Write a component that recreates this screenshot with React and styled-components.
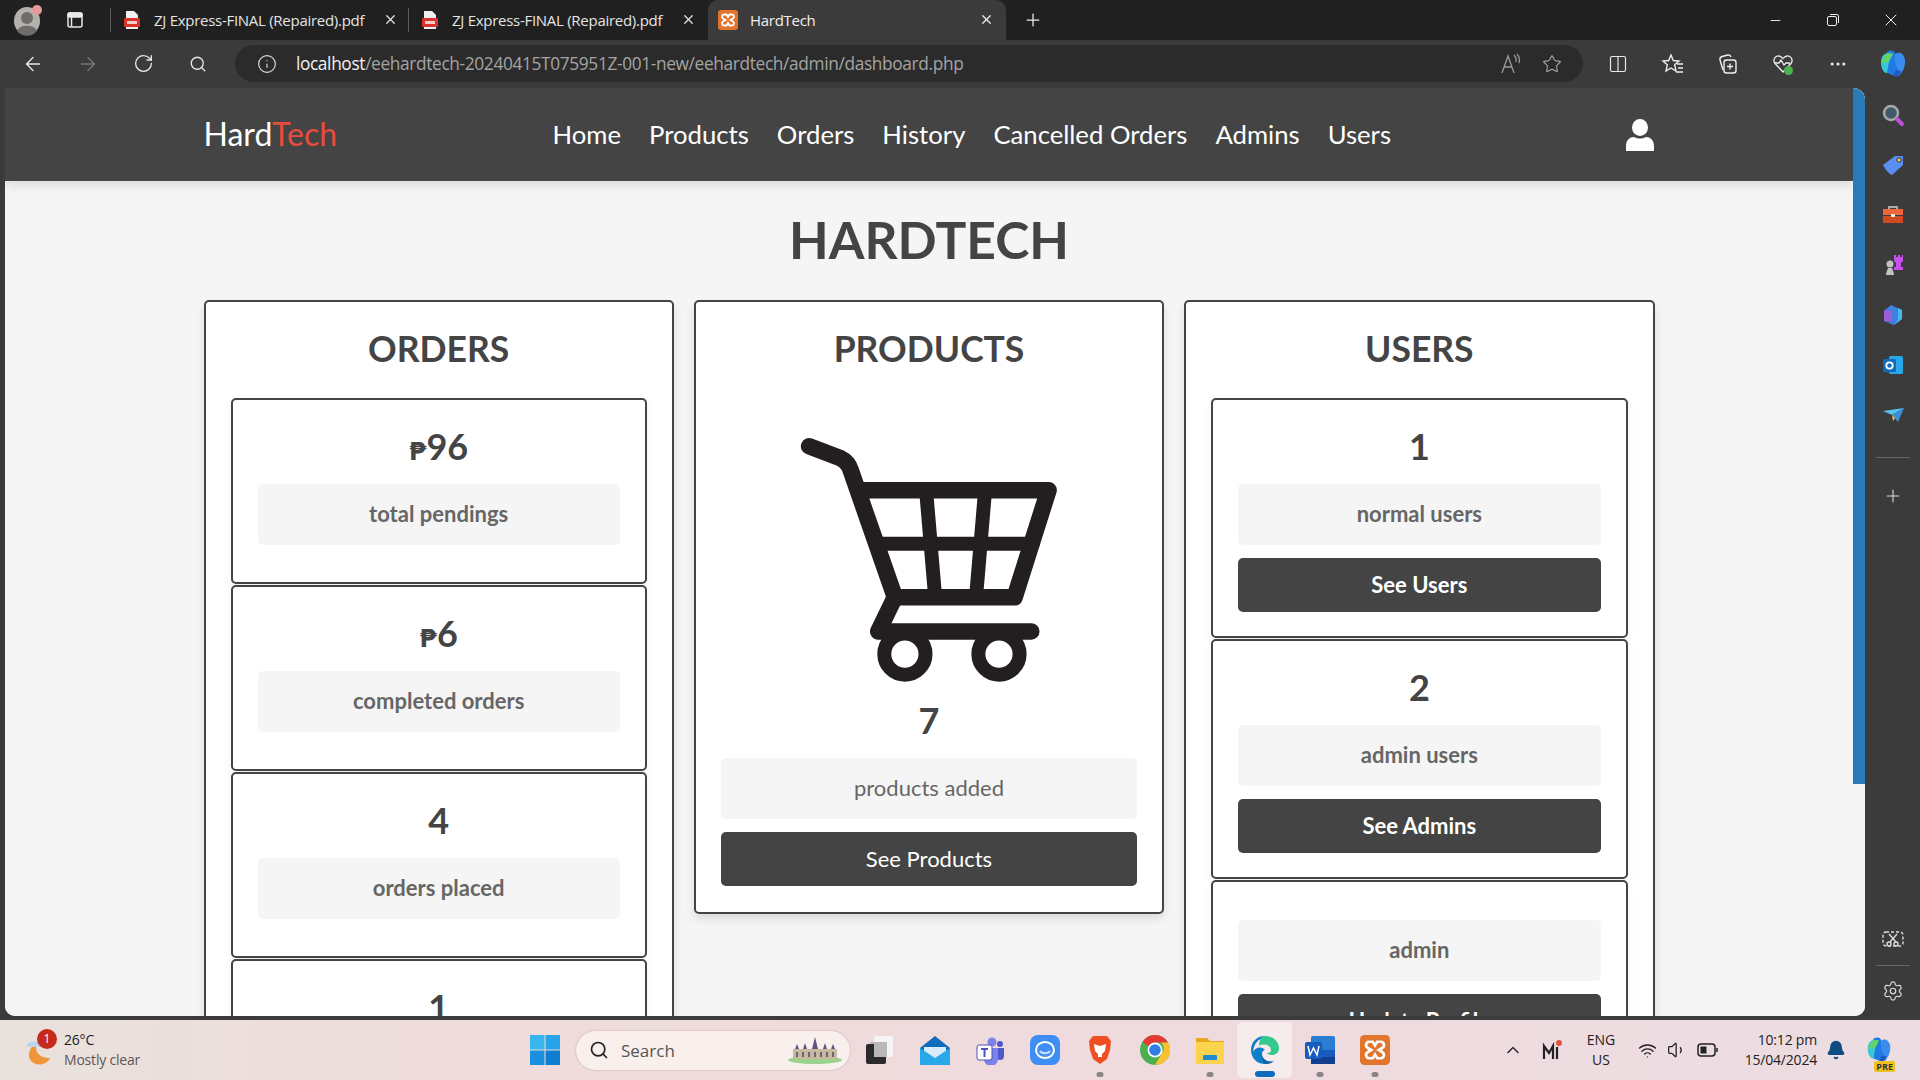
import styled, { createGlobalStyle } from "styled-components"
import {
  ArrowLeft,
  ArrowRight,
  RotateCw,
  Search,
  Info,
  Star,
  Plus,
  X,
  Minus,
  ChevronUp,
  Wifi,
  Volume1,
  Bell,
  Settings,
  MoreHorizontal,
  Columns2,
} from "lucide-react"

const GlobalStyle = createGlobalStyle`
  html, body {
    margin: 0;
    padding: 0;
    width: 1920px;
    height: 1080px;
    overflow: hidden;
    background: #202020;
  }
  * { box-sizing: border-box; }
`

const uiFont = `"Open Sans", "Noto Sans", sans-serif`
const pageFont = `Lato, "Noto Sans", "DejaVu Sans", sans-serif`

const Screen = styled.div`
  width: 1920px;
  height: 1080px;
  display: flex;
  flex-direction: column;
  overflow: hidden;
  font-family: ${uiFont};
`

/* browser chrome */
const TabBar = styled.div`
  height: 40px;
  flex: none;
  display: flex;
  align-items: stretch;
  background: #202020;
  color: #eee;
`

const TabStart = styled.div`
  width: 112px;
  display: flex;
  align-items: center;
  padding-left: 12px;
  gap: 21px;
`

const Tab = styled.div`
  width: 298px;
  display: flex;
  align-items: center;
  gap: 12px;
  padding: 0 12px 1px 10px;
  font-size: 15px;
  letter-spacing: -0.28px;
  color: ${(p) => (p.$active ? "#f0f0f0" : "#e4e4e4")};
  background: ${(p) => (p.$active ? "#3b3b3b" : "transparent")};
  border-radius: ${(p) => (p.$active ? "10px 10px 0 0" : "0")};
  position: relative;

  &::before {
    content: "";
    display: ${(p) => (p.$sep ? "block" : "none")};
    position: absolute;
    left: -2px;
    top: 8px;
    bottom: 8px;
    width: 1px;
    background: #5a5a5a;
  }

  span {
    flex: 1;
    white-space: nowrap;
  }
`

const NewTab = styled.div`
  margin-left: 17px;
  display: flex;
  align-items: center;
`

const WindowControls = styled.div`
  margin-left: auto;
  display: flex;
`

const WindowButton = styled.div`
  width: 58px;
  display: flex;
  align-items: center;
  justify-content: center;
`

const Toolbar = styled.div`
  height: 48px;
  flex: none;
  display: flex;
  align-items: center;
  padding: 0 0 1px 6px;
  background: #3b3b3b;
  color: #eee;
`

const ToolSlot = styled.div`
  width: ${(p) => p.$w || 55}px;
  display: flex;
  align-items: center;
  justify-content: center;
  color: ${(p) => (p.$dim ? "#777" : "#e8e8e8")};
`

const AddressBar = styled.div`
  width: 1349px;
  height: 37px;
  margin: 0 7px 0 9px;
  border-radius: 19px;
  background: #2b2b2b;
  display: flex;
  align-items: center;
  padding: 0 21px 0 22px;
  gap: 19px;
  color: #ddd;
`

const Url = styled.div`
  flex: 1;
  font-size: 17.3px;
  letter-spacing: -0.35px;
  color: #a4a4a4;
  white-space: nowrap;

  b {
    font-weight: 400;
    color: #f2f2f2;
  }
`

const Main = styled.div`
  flex: 1;
  min-height: 0;
  display: flex;
  padding: 0 0 4px 5px;
  background: #3b3b3b;
`

const WebArea = styled.div`
  width: 1860px;
  display: flex;
  overflow: hidden;
  border-radius: 0 12px 10px 10px;
  background: #f5f5f5;
`

const Viewport = styled.div`
  width: 1848px;
  display: flex;
  flex-direction: column;
  overflow: hidden;
  font-family: ${pageFont};
`

const ScrollTrack = styled.div`
  width: 12px;
  background: #f5f5f5;
`

const ScrollThumb = styled.div`
  height: 696px;
  background: #2a7ab8;
`

/* the page itself */
const Navbar = styled.header`
  height: 93px;
  flex: none;
  background: #444;
  box-shadow: 0 5px 10px rgba(0, 0, 0, 0.1);
  position: relative;
  z-index: 1;
`

const NavInner = styled.div`
  width: 1451px;
  height: 100%;
  margin: 0 auto;
  display: flex;
  align-items: center;
`

const Logo = styled.a`
  width: 349px;
  padding-bottom: 2px;
  font-size: 32px;
  color: #fff;

  span {
    color: #e74c3c;
  }
`

const NavLinks = styled.nav`
  display: flex;
  gap: 28px;
  padding-bottom: 2px;
`

const NavLink = styled.a`
  font-size: 25.7px;
  color: #fff;
`

const UserIcon = styled.div`
  margin-left: auto;
  margin-right: 1px;
  display: flex;
`

const Page = styled.main`
  flex: 1;
  min-height: 0;
  overflow: hidden;
  background: #f5f5f5;
`

const Heading = styled.h1`
  margin: 28px 0 31px;
  font-size: 51.5px;
  line-height: 60px;
  font-weight: 700;
  text-align: center;
  color: #444;
`

const Columns = styled.div`
  width: 1451px;
  margin: 0 auto;
  display: grid;
  grid-template-columns: repeat(3, 1fr);
  gap: 20px;
  align-items: start;
`

const Card = styled.section`
  background: #fff;
  border: 2px solid #444;
  border-radius: 5px;
  padding: 24px 25px 26px;
  box-shadow: 0 5px 10px rgba(0, 0, 0, 0.1);
  display: flex;
  flex-direction: column;
`

const CardTitle = styled.h2`
  margin: 0 0 26px;
  font-size: 35.5px;
  line-height: 46px;
  font-weight: 700;
  text-align: center;
  color: #444;
`

const InnerCard = styled.div`
  background: #fff;
  border: 2px solid #444;
  border-radius: 5px;
  padding: ${(p) => (p.$noValue ? "38px" : "25px")} 25px 0;
  height: ${(p) => p.$h}px;
  margin-bottom: 1.5px;
  box-shadow: 0 5px 10px rgba(0, 0, 0, 0.06);
`

const Value = styled.div`
  height: 46px;
  margin-bottom: 13px;
  font-size: 36px;
  line-height: 43px;
  font-weight: 700;
  text-align: center;
  color: #444;

  small {
    font-size: 25px;
    font-family: "DejaVu Sans", sans-serif;
  }
`

const Pill = styled.div`
  height: 61px;
  padding-bottom: 2px;
  border-radius: 5px;
  background: #f5f5f5;
  display: flex;
  align-items: center;
  justify-content: center;
  font-size: 22px;
  font-weight: ${(p) => (p.$plain ? 400 : 700)};
  color: #666;
`

const DarkButton = styled.a`
  height: 54px;
  margin-top: 13px;
  padding-bottom: 2px;
  border-radius: 5px;
  background: #444;
  display: flex;
  align-items: center;
  justify-content: center;
  font-size: 22px;
  font-weight: ${(p) => (p.$plain ? 400 : 700)};
  color: #fff;
`

const CartWrap = styled.div`
  margin: 39px 0 16px;
  display: flex;
  justify-content: center;
`

const SideBar = styled.aside`
  flex: 1;
  display: flex;
  flex-direction: column;
  align-items: center;
  padding-top: 2px;
  color: #ddd;
`

const SideItem = styled.div`
  height: 50px;
  flex: none;
  display: flex;
  align-items: center;
  justify-content: center;
`

const SideRule = styled.div`
  width: 34px;
  height: 1px;
  flex: none;
  margin: ${(p) => p.$m || "0"};
  background: #666;
`

const Spacer = styled.div`
  flex: 1;
`

/* windows taskbar */
const Taskbar = styled.footer`
  height: 60px;
  flex: none;
  display: flex;
  align-items: center;
  background: linear-gradient(90deg, #e9e1dc 0%, #efdcdb 25%, #efdadd 60%, #ecdde2 100%);
  color: #222;
`

const Weather = styled.div`
  width: 517px;
  display: flex;
  align-items: center;
  padding-left: 24px;
  gap: 8px;
`

const WeatherIcon = styled.div`
  position: relative;
  width: 32px;
  height: 40px;
`

const Badge = styled.div`
  position: absolute;
  top: -1px;
  right: -1px;
  width: 20px;
  height: 20px;
  border-radius: 50%;
  background: #c42b1c;
  color: #fff;
  font-size: 12px;
  line-height: 20px;
  text-align: center;
`

const WeatherText = styled.div`
  font-size: 14px;
  line-height: 20px;
  letter-spacing: -0.2px;

  div + div {
    color: #5d5555;
  }
`

const TaskSlot = styled.div`
  width: ${(p) => p.$w || 55}px;
  height: 56px;
  flex: none;
  display: flex;
  align-items: center;
  justify-content: center;
  position: relative;
  border-radius: 5px;
  background: ${(p) => (p.$active ? "rgba(255,255,255,.45)" : "transparent")};

  &::after {
    content: "";
    display: ${(p) => (p.$dot ? "block" : "none")};
    position: absolute;
    bottom: 1px;
    left: 50%;
    width: ${(p) => (p.$active ? 20 : 7)}px;
    height: ${(p) => (p.$active ? 6 : 5)}px;
    transform: translateX(-50%);
    border-radius: 3px;
    background: ${(p) => (p.$active ? "#0b6cbd" : "#8a8488")};
  }
`

const SearchBox = styled.div`
  width: 274px;
  height: 39px;
  margin: 0 2px 0 4px;
  border-radius: 20px;
  background: #f9f0ed;
  box-shadow: 0 0 2px rgba(0, 0, 0, 0.25);
  display: flex;
  align-items: center;
  padding: 0 7px 0 13px;
  gap: 12px;
  font-size: 17px;
  color: #555;

  span {
    flex: 1;
  }
`

const Tray = styled.div`
  margin-left: auto;
  padding-right: 17px;
  display: flex;
  align-items: center;
  color: #222;
`

const TraySlot = styled.div`
  width: ${(p) => p.$w}px;
  display: flex;
  align-items: center;
  justify-content: center;
  position: relative;
`

const PreTag = styled.div`
  position: absolute;
  right: 8px;
  bottom: -8px;
  padding: 0 2px;
  border-radius: 2px;
  background: #f0c21f;
  font-size: 9px;
  line-height: 11px;
  font-weight: 700;
  color: #333;
`

const Lang = styled.div`
  width: 48px;
  margin-right: 7px;
  font-size: 14px;
  line-height: 20px;
  text-align: center;
`

const Clock = styled.div`
  width: 93px;
  font-size: 14px;
  line-height: 20px;
  text-align: right;
  letter-spacing: -0.2px;
`

/* drawings */
function PdfIcon() {
  return (
    <svg width="20" height="20" viewBox="0 0 20 20">
      <path d="M4 1h8l4 4v14H4z" fill="#f1f1f1" />
      <rect x="2" y="8" width="16" height="9" rx="1" fill="#d8342c" />
      <rect x="5" y="11" width="10" height="3" fill="#f6c9c5" />
    </svg>
  )
}

function XamppIcon({ size = 20 }) {
  return (
    <svg width={size} height={size} viewBox="0 0 20 20">
      <rect width="20" height="20" rx="3" fill="#e2752c" />
      <path
        d="M6 4.5h2.5L10 7l1.5-2.500H14a2.200 2.200 0 0 1 1 4L12.500 10l2.500 1.500a2.200 2.200 0 0 1-1 4h-2.500L10 13l-1.500 2.500H6a2.200 2.200 0 0 1-1-4L7.500 10 5 8.500a2.200 2.200 0 0 1 1-4z"
        fill="none"
        stroke="#fff"
        strokeWidth="1.800"
      />
    </svg>
  )
}

function Avatar() {
  return (
    <svg width="32" height="32" viewBox="0 0 32 32">
      <ellipse cx="15" cy="17" rx="13" ry="14" fill="#b5b1ad" />
      <circle cx="15" cy="14" r="6" fill="#6f6d6b" />
      <path d="M5 27c2-7 18-7 20 0a13 13 0 0 1-20 0z" fill="#6f6d6b" />
      <circle cx="25" cy="6" r="5" fill="#e79a9a" />
    </svg>
  )
}

function VerticalTabs() {
  return (
    <svg width="20" height="20" viewBox="0 0 20 20" fill="none" stroke="#e8e8e8" strokeWidth="1.500">
      <rect x="3" y="3" width="14" height="14" rx="2" />
      <path d="M6.500 3.500v13" />
      <rect x="3" y="3" width="14" height="4" rx="1.500" fill="#e8e8e8" />
    </svg>
  )
}

function RestoreIcon() {
  return (
    <svg width="14" height="14" viewBox="0 0 14 14" fill="none" stroke="#eee">
      <rect x="1.500" y="3.500" width="9" height="9" rx="1.500" />
      <path d="M4 1.500h7a1.500 1.500 0 0 1 1.500 1.500v7" />
    </svg>
  )
}

function ReadAloudIcon() {
  return (
    <svg width="24" height="24" viewBox="0 0 24 24" fill="none" stroke="#999" strokeWidth="1.300">
      <path d="M3 21L9 4l6 17M5 15h8" />
      <path d="M15 3c2 2 2.500 4 2 7M18 2c2.500 3 3 6 2 9" />
    </svg>
  )
}

function FavoritesBar() {
  return (
    <svg width="24" height="24" viewBox="0 0 24 24" fill="none" stroke="#eee" strokeWidth="1.400">
      <path d="M10 3l2.300 5.500L18 9l-4.300 3.800L15 19l-5-3-5 3 1.300-6.200L2 9l5.700-.5z" />
      <path d="M16 12h6M17 16h5M15 20h7" />
    </svg>
  )
}

function HeartShield() {
  return (
    <svg width="24" height="24" viewBox="0 0 24 24" fill="none" stroke="#eee" strokeWidth="1.300">
      <path d="M12 20L4 11.500C1.500 8 4 3.500 8 4c2 .2 3 1.500 4 2.500C13 5.500 14 4.200 16 4c4-.5 6.500 4 4 7.500z" />
      <path d="M4 11h4l2-3 3 5 2-2h4" />
      <circle cx="17.500" cy="18.500" r="4.500" fill="#4caf50" stroke="none" />
    </svg>
  )
}

function CollectionsIcon() {
  return (
    <svg width="22" height="22" viewBox="0 0 22 22" fill="none" stroke="#eee" strokeWidth="1.400">
      <path d="M6 17L3 7c-.4-2 .5-3 2-3.500L11 2c1.500-.3 2.500.5 3 2" />
      <rect x="7" y="7" width="12" height="13" rx="2.500" />
      <path d="M13 10.500v6M10 13.500h6" />
    </svg>
  )
}

function Copilot({ size = 30 }) {
  return (
    <svg width={size} height={size} viewBox="0 0 30 30">
      <path d="M9 3c3-2 7-2 8 1l6 18c1 4-3 6-6 5L9 24z" fill="#1f7be0" />
      <path d="M3 13c0-6 4-9 7-9l5 1-4 8-2 11c-4 0-6-5-6-11z" fill="#39c6d8" />
      <path d="M17 5c4-3 9-1 10 6 .6 6-2 12-5 14l-5-12z" fill="#3a8df0" />
      <path d="M10 13l5-8c-2-1-4-1-6 0-3 2-5 5-5 9z" fill="#65d45f" />
      <path d="M15 27c3 1 7-1 8-5l-5-1z" fill="#2456c9" />
    </svg>
  )
}

function Lens() {
  return (
    <svg width="24" height="24" viewBox="0 0 24 24">
      <circle cx="10" cy="10" r="7" fill="#3f5a68" stroke="#a8a8a8" strokeWidth="2.500" />
      <path d="M16 16l5 5" stroke="#c04fd8" strokeWidth="4" strokeLinecap="round" />
    </svg>
  )
}

function TagIcon() {
  return (
    <svg width="24" height="24" viewBox="0 0 24 24">
      <path d="M2 12L14 3h8v9L11 22c-3-1-7-6-9-10z" fill="#5b8df5" />
      <circle cx="18" cy="7" r="2.200" fill="#f1c84b" stroke="#333" />
    </svg>
  )
}

function Toolbox() {
  return (
    <svg width="24" height="24" viewBox="0 0 24 24">
      <path d="M8 7V4h8v3" fill="none" stroke="#aaa" strokeWidth="2" />
      <rect x="2" y="6" width="20" height="6" fill="#f0653a" />
      <rect x="2" y="13" width="20" height="7" fill="#cf4a22" />
      <rect x="10" y="11" width="4" height="3" fill="#eee" />
    </svg>
  )
}

function ChessIcon() {
  return (
    <svg width="24" height="24" viewBox="0 0 24 24">
      <circle cx="9" cy="11" r="3.500" fill="#c2c2c2" />
      <path d="M5 22c0-3 1.500-5 2-7h4c.5 2 2 4 2 7z" fill="#c2c2c2" />
      <path d="M13 2h2v2h2V2h2v2h2V2h1v6l-2 2v4h2v3h-9v-3h2v-4l-2-2z" fill="#c64ff0" />
    </svg>
  )
}

function OfficeIcon() {
  return (
    <svg width="24" height="24" viewBox="0 0 24 24">
      <path d="M10 2l11 5v9l-8 6-10-4 8 1V8l-7 3V7z" fill="#3f7fe0" />
      <path d="M3 7v11l8 1V8z" fill="#9a5fd8" />
      <path d="M13 22l8-6V7l-4-2v12z" fill="#46b9e8" />
    </svg>
  )
}

function OutlookIcon({ size = 24 }) {
  return (
    <svg width={size} height={size} viewBox="0 0 24 24">
      <rect x="8" y="3" width="14" height="18" rx="1.500" fill="#28a8ea" />
      <rect x="2" y="6" width="13" height="13" rx="1.500" fill="#0f6cbd" />
      <circle cx="8.500" cy="12.500" r="3.200" fill="none" stroke="#fff" strokeWidth="1.800" />
    </svg>
  )
}

function PlaneIcon() {
  return (
    <svg width="24" height="24" viewBox="0 0 24 24">
      <path d="M2 8l21-3-12 7z" fill="#56c4f0" />
      <path d="M23 5l-6 14-6-7z" fill="#3b8fdb" />
      <path d="M11 12l1 6 2-3z" fill="#f4c33d" />
    </svg>
  )
}

function ScreenClip() {
  return (
    <svg width="24" height="24" viewBox="0 0 24 24" fill="none" stroke="#ddd" strokeWidth="1.400">
      <rect x="2" y="4" width="20" height="14" rx="3" strokeDasharray="3 2" />
      <path d="M8 6l7 8M16 6l-7 8" />
      <circle cx="8" cy="16" r="2" fill="#3b3b3b" />
      <circle cx="15" cy="16" r="2" fill="#3b3b3b" />
    </svg>
  )
}

function WeatherArt() {
  return (
    <svg width="32" height="40" viewBox="0 0 32 40">
      <path d="M12 14c-1 8 3 14 14 14-3 7-13 9-19 3-4-5-2-14 5-17z" fill="#f1953a" />
      <path d="M3 16c0-3 3-5 6-4 2-2 5-1 6 2 2 0 3 1 3 3H4z" fill="#bcd3ec" />
    </svg>
  )
}

function StartIcon() {
  return (
    <svg width="30" height="30" viewBox="0 0 30 30">
      <rect x="0" y="0" width="14.500" height="14.500" fill="#38b6ee" />
      <rect x="15.500" y="0" width="14.500" height="14.500" fill="#27a3e8" />
      <rect x="0" y="15.500" width="14.500" height="14.500" fill="#1a8fdd" />
      <rect x="15.500" y="15.500" width="14.500" height="14.500" fill="#0f7dd2" />
    </svg>
  )
}

function Castle() {
  return (
    <svg width="56" height="28" viewBox="0 0 56 28">
      <ellipse cx="28" cy="24" rx="27" ry="4" fill="#9bd28d" />
      <rect x="6" y="13" width="44" height="10" fill="#c9b9a2" />
      <path d="M25 13l3-12 3 12zM8 13l2-5 2 5zM44 13l2-5 2 5zM16 13l2-6 2 6zM36 13l2-6 2 6z" fill="#5a567f" />
      <path d="M10 16v5M16 16v5M22 16v5M28 16v5M34 16v5M40 16v5M46 16v5" stroke="#4c4a66" strokeWidth="1.500" />
    </svg>
  )
}

function WindowsStack() {
  return (
    <svg width="30" height="30" viewBox="0 0 30 30">
      <rect x="9" y="1" width="19" height="21" rx="2" fill="#f5f5f5" />
      <rect x="5" y="7" width="15" height="15" fill="#b9b9b9" />
      <rect x="1" y="9" width="20" height="20" rx="2" fill="#2b2b2b" />
      <rect x="9" y="7" width="13" height="15" fill="#b9b9b9" />
    </svg>
  )
}

function MailIcon() {
  return (
    <svg width="30" height="30" viewBox="0 0 30 30">
      <path d="M0 13L15 1l15 12v16H0z" fill="#0f6cbd" />
      <path d="M4 12h22v7l-11 7-11-7z" fill="#d8edf9" />
      <path d="M0 13l15 10 15-10v17H0z" fill="#28a8ea" />
    </svg>
  )
}

function TeamsIcon() {
  return (
    <svg width="30" height="30" viewBox="0 0 30 30">
      <circle cx="17" cy="7" r="4.500" fill="#7b83eb" />
      <circle cx="25" cy="9" r="3" fill="#5059c9" />
      <path d="M21 13h8v8a4 4 0 0 1-8 0z" fill="#5059c9" />
      <path d="M9 13h14v11a5 5 0 0 1-14 0z" fill="#7b83eb" />
      <rect x="2" y="10" width="15" height="15" rx="2" fill="#fff" stroke="#4b53bc" />
      <path d="M6 14h7M9.500 14v8" stroke="#4b53bc" strokeWidth="2" />
    </svg>
  )
}

function ChatIcon() {
  return (
    <svg width="30" height="30" viewBox="0 0 30 30">
      <rect x="0" y="0" width="30" height="30" rx="8" fill="#3f8ef5" />
      <ellipse cx="15" cy="15" rx="9" ry="8" fill="none" stroke="#fff" strokeWidth="2" />
      <path d="M10 16c2 3 8 3 10 0" fill="none" stroke="#cfe2ff" strokeWidth="2" />
    </svg>
  )
}

function BraveIcon() {
  return (
    <svg width="30" height="30" viewBox="0 0 30 30">
      <path d="M8 1h14l4 5-1 9-3 9-7 5-7-5-3-9-1-9z" fill="#f04e23" />
      <path d="M9 9l6 2 6-2-1 7-3 3v3h-4v-3l-3-3z" fill="#fff" />
    </svg>
  )
}

function ChromeIcon() {
  return (
    <svg width="30" height="30" viewBox="0 0 30 30">
      <circle cx="15" cy="15" r="15" fill="#4caf50" />
      <path d="M15 0a15 15 0 0 1 13 7.500H15a7.500 7.500 0 0 0-6.500 3.800L2.500 7A15 15 0 0 1 15 0z" fill="#e53935" />
      <path d="M28 7.500A15 15 0 0 1 15 30l6.500-11.300A7.500 7.500 0 0 0 21 7.500z" fill="#fbc02d" />
      <circle cx="15" cy="15" r="7.500" fill="#fff" />
      <circle cx="15" cy="15" r="5.800" fill="#2f7ee8" />
    </svg>
  )
}

function FolderIcon() {
  return (
    <svg width="30" height="30" viewBox="0 0 30 30">
      <path d="M1 3h11l3 3h14v22H1z" fill="#e6a81d" />
      <rect x="1" y="7" width="28" height="22" fill="#fbd34d" />
      <rect x="8" y="20" width="14" height="5" rx="1" fill="#1f8ad0" />
    </svg>
  )
}

function EdgeIcon() {
  return (
    <svg width="30" height="30" viewBox="0 0 30 30">
      <path d="M15 1C7 1 1 7 1 15c0 8 6 14 14 14 4 0 7-1 9-3-5 2-12-1-12-7 0-3 2-4 3-4-3-4-10-3-12 2C4 8 9 3 15 3z" fill="#0c7fc7" />
      <path d="M15 1c8 0 14 6 14 12 0 5-4 7-7 7-3 0-5-1-5-2 3 0 4-1 4-3 0-5-8-7-12-4C9 6 11 1 15 1z" fill="#36c98e" />
      <path d="M12 19c0 6 7 9 12 7-3 2-6 3-9 3-2 0-3-4-3-10z" fill="#1564a5" />
    </svg>
  )
}

function WordIcon() {
  return (
    <svg width="30" height="30" viewBox="0 0 30 30">
      <rect x="6" y="1" width="24" height="28" rx="2" fill="#2b7cd3" />
      <rect x="6" y="15" width="24" height="7" fill="#185abd" />
      <rect x="6" y="22" width="24" height="7" fill="#103f91" />
      <rect x="0" y="7" width="17" height="17" rx="2" fill="#185abd" />
      <path d="M3 11l2 9 3.500-7 3.500 7 2-9" fill="none" stroke="#fff" strokeWidth="1.500" />
    </svg>
  )
}

function MailTray() {
  return (
    <svg width="24" height="24" viewBox="0 0 24 24">
      <path d="M3 21V8l5 7 4-7v13M16 21V9" fill="none" stroke="#222" strokeWidth="2.200" />
      <circle cx="18" cy="5" r="3" fill="#e0533a" />
    </svg>
  )
}

function BatteryIcon() {
  return (
    <svg width="22" height="14" viewBox="0 0 22 14" fill="none" stroke="#222" strokeWidth="1.500">
      <rect x="1" y="1" width="17" height="12" rx="3" />
      <rect x="3.500" y="3.500" width="6" height="7" fill="#222" stroke="none" />
      <path d="M20 5v4" />
    </svg>
  )
}

function CartIcon() {
  return (
    <svg width="258" height="246" viewBox="300 115 775 740" fill="none" stroke="#231f20" strokeLinecap="round" strokeLinejoin="round">
      <g strokeWidth="50">
        <path d="M327 143L420 178Q445 190 452 215L585 597H945L1047 275H490" />
        <path d="M585 597L535 700H995" />
      </g>
      <g strokeWidth="42">
        <path d="M680 290L705 585M855 290L830 585M535 436H1000" />
        <circle cx="615" cy="768" r="62" />
        <circle cx="898" cy="768" r="62" />
      </g>
    </svg>
  )
}

const navItems = ["Home", "Products", "Orders", "History", "Cancelled Orders", "Admins", "Users"]

// the fourth card runs off the fold, only the top of its number shows
const orderStats = [
  { value: "96", label: "total pendings", peso: true },
  { value: "6", label: "completed orders", peso: true },
  { value: "4", label: "orders placed" },
  { value: "1" },
]

const userStats = [
  { value: "1", label: "normal users", button: "See Users" },
  { value: "2", label: "admin users", button: "See Admins" },
  { label: "admin", button: "Update Profile" },
]

const taskApps = [
  { icon: <WindowsStack /> },
  { icon: <MailIcon /> },
  { icon: <TeamsIcon /> },
  { icon: <ChatIcon /> },
  { icon: <BraveIcon />, dot: true },
  { icon: <ChromeIcon /> },
  { icon: <FolderIcon />, dot: true },
  { icon: <EdgeIcon />, dot: true, active: true },
  { icon: <WordIcon />, dot: true },
  { icon: <XamppIcon size={30} />, dot: true },
]

export default function App() {
  return (
    <Screen>
      <GlobalStyle />
      <TabBar>
        <TabStart>
          <Avatar />
          <VerticalTabs />
        </TabStart>
        <Tab $sep>
          <PdfIcon />
          <span>ZJ Express-FINAL (Repaired).pdf</span>
          <X size={15} />
        </Tab>
        <Tab $sep>
          <PdfIcon />
          <span>ZJ Express-FINAL (Repaired).pdf</span>
          <X size={15} />
        </Tab>
        <Tab $active>
          <XamppIcon />
          <span>HardTech</span>
          <X size={15} />
        </Tab>
        <NewTab>
          <Plus size={20} strokeWidth={1.5} />
        </NewTab>
        <WindowControls>
          <WindowButton>
            <Minus size={15} strokeWidth={1.5} />
          </WindowButton>
          <WindowButton>
            <RestoreIcon />
          </WindowButton>
          <WindowButton>
            <X size={20} strokeWidth={1.2} />
          </WindowButton>
        </WindowControls>
      </TabBar>

      <Toolbar>
        <ToolSlot>
          <ArrowLeft size={22} strokeWidth={1.5} />
        </ToolSlot>
        <ToolSlot $dim>
          <ArrowRight size={22} strokeWidth={1.5} />
        </ToolSlot>
        <ToolSlot>
          <RotateCw size={21} strokeWidth={1.5} />
        </ToolSlot>
        <ToolSlot>
          <Search size={18} strokeWidth={1.7} />
        </ToolSlot>
        <AddressBar>
          <Info size={20} strokeWidth={1.4} />
          <Url>
            <b>localhost</b>/eehardtech-20240415T075951Z-001-new/eehardtech/admin/dashboard.php
          </Url>
          <ReadAloudIcon />
          <Star size={20} strokeWidth={1.3} color="#aaa" />
        </AddressBar>
        <ToolSlot>
          <Columns2 size={20} strokeWidth={1.4} />
        </ToolSlot>
        <ToolSlot>
          <FavoritesBar />
        </ToolSlot>
        <ToolSlot>
          <CollectionsIcon />
        </ToolSlot>
        <ToolSlot>
          <HeartShield />
        </ToolSlot>
        <ToolSlot>
          <MoreHorizontal size={20} strokeWidth={1.8} />
        </ToolSlot>
        <ToolSlot>
          <Copilot />
        </ToolSlot>
      </Toolbar>

      <Main>
        <WebArea>
          <Viewport>
            <Navbar>
              <NavInner>
                <Logo>
                  Hard<span>Tech</span>
                </Logo>
                <NavLinks>
                  {navItems.map((item) => (
                    <NavLink key={item}>{item}</NavLink>
                  ))}
                </NavLinks>
                <UserIcon>
                  <svg width="28" height="32" viewBox="0 0 28 32" fill="#fff">
                    <ellipse cx="14" cy="8.500" rx="8" ry="8.500" />
                    <path d="M0 32v-5c0-6 4-9 8-9 4 2 8 2 12 0 4 0 8 3 8 9v5z" />
                  </svg>
                </UserIcon>
              </NavInner>
            </Navbar>
            <Page>
              <Heading>HARDTECH</Heading>
              <Columns>
                <Card>
                  <CardTitle>ORDERS</CardTitle>
                  {orderStats.map((s) => (
                    <InnerCard key={s.value} $h={185.5}>
                      <Value>
                        {s.peso && <small>₱</small>}
                        {s.value}
                      </Value>
                      {s.label && <Pill>{s.label}</Pill>}
                    </InnerCard>
                  ))}
                </Card>
                <Card>
                  <CardTitle>PRODUCTS</CardTitle>
                  <CartWrap>
                    <CartIcon />
                  </CartWrap>
                  <Value>7</Value>
                  <Pill $plain>products added</Pill>
                  <DarkButton $plain>See Products</DarkButton>
                </Card>
                <Card>
                  <CardTitle>USERS</CardTitle>
                  {userStats.map((s) => (
                    <InnerCard key={s.label} $h={239.7} $noValue={!s.value}>
                      {s.value && <Value>{s.value}</Value>}
                      <Pill>{s.label}</Pill>
                      <DarkButton>{s.button}</DarkButton>
                    </InnerCard>
                  ))}
                </Card>
              </Columns>
            </Page>
          </Viewport>
          <ScrollTrack>
            <ScrollThumb />
          </ScrollTrack>
        </WebArea>
        <SideBar>
          <SideItem>
            <Lens />
          </SideItem>
          <SideItem>
            <TagIcon />
          </SideItem>
          <SideItem>
            <Toolbox />
          </SideItem>
          <SideItem>
            <ChessIcon />
          </SideItem>
          <SideItem>
            <OfficeIcon />
          </SideItem>
          <SideItem>
            <OutlookIcon />
          </SideItem>
          <SideItem>
            <PlaneIcon />
          </SideItem>
          <SideRule $m="17px 0 13px" />
          <SideItem>
            <Plus size={20} strokeWidth={1.3} />
          </SideItem>
          <Spacer />
          <SideItem>
            <ScreenClip />
          </SideItem>
          <SideRule />
          <SideItem>
            <Settings size={22} strokeWidth={1.3} />
          </SideItem>
        </SideBar>
      </Main>

      <Taskbar>
        <Weather>
          <WeatherIcon>
            <WeatherArt />
            <Badge>1</Badge>
          </WeatherIcon>
          <WeatherText>
            <div>26°C</div>
            <div>Mostly clear</div>
          </WeatherText>
        </Weather>
        <TaskSlot>
          <StartIcon />
        </TaskSlot>
        <SearchBox>
          <Search size={20} strokeWidth={2} color="#222" />
          <span>Search</span>
          <Castle />
        </SearchBox>
        {taskApps.map((app, i) => (
          <TaskSlot key={i} $dot={app.dot} $active={app.active}>
            {app.icon}
          </TaskSlot>
        ))}
        <Tray>
          <TraySlot $w={32}>
            <ChevronUp size={20} strokeWidth={1.6} />
          </TraySlot>
          <TraySlot $w={48}>
            <MailTray />
          </TraySlot>
          <Lang>
            ENG
            <br />
            US
          </Lang>
          <TraySlot $w={30}>
            <Wifi size={19} strokeWidth={1.7} />
          </TraySlot>
          <TraySlot $w={29}>
            <Volume1 size={20} strokeWidth={1.5} />
          </TraySlot>
          <TraySlot $w={33}>
            <BatteryIcon />
          </TraySlot>
          <Clock>
            10:12 pm
            <br />
            15/04/2024
          </Clock>
          <TraySlot $w={38}>
            <Bell size={20} fill="#0f4c81" color="#0f4c81" />
          </TraySlot>
          <TraySlot $w={48}>
            <Copilot size={28} />
            <PreTag>PRE</PreTag>
          </TraySlot>
        </Tray>
      </Taskbar>
    </Screen>
  )
}
